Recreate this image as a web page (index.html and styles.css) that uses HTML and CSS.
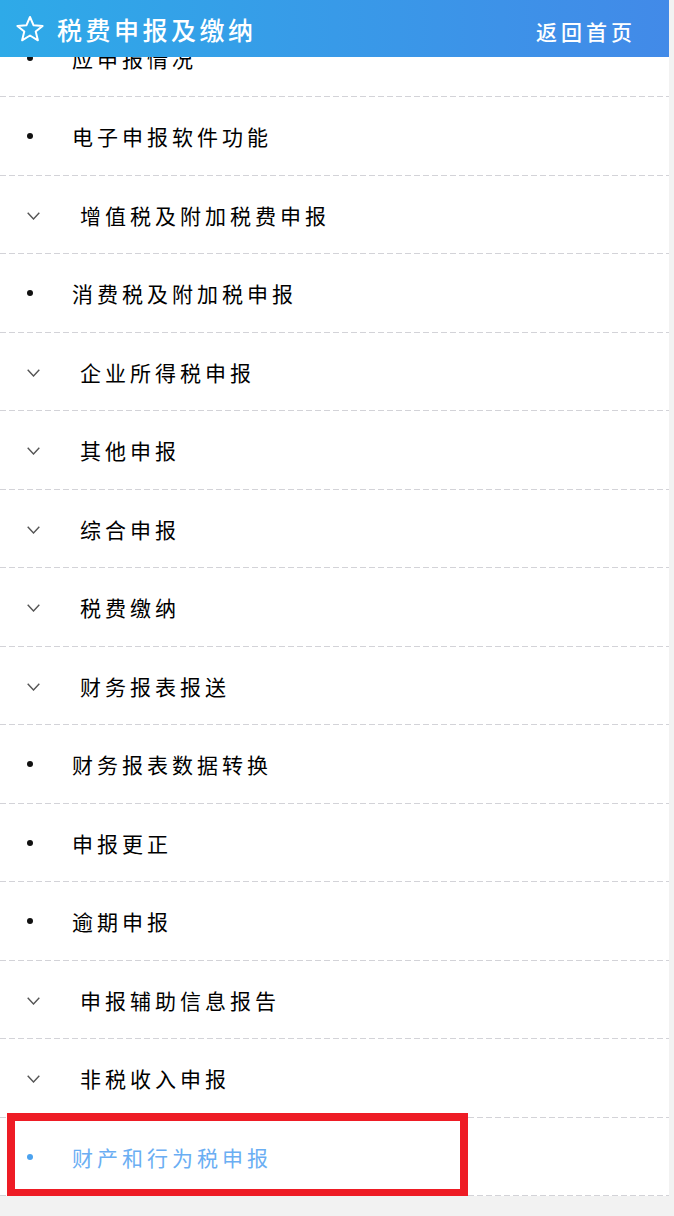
FILE: index.html
```html
<!doctype html>
<html lang="zh-CN">
<head>
    <meta charset="UTF-8">
    <meta name="viewport" content="width=device-width, initial-scale=1.0">
    <title>税费申报及缴纳</title>
    <link rel="stylesheet" href="styles.css">
</head>
<body>
    <div class="head">
        <div class="title">
            <svg class="star" width="30" height="27" viewBox="0 0 30 27">
                <polygon points="15,2 18.6,10.3 27.6,10.9 20.7,16.6 22.9,25.3 15,20.5 7.1,25.3 9.3,16.6 2.4,10.9 11.4,10.3" fill="none" stroke="#fff" stroke-width="2" stroke-linejoin="round"/>
            </svg>
            <span>税费申报及缴纳</span>
        </div>
        <a class="home" href="">返回首页</a>
    </div>
    <div class="page">
        <ul class="menu">
            <li><i class="dot"></i><span>应申报情况</span></li>
            <li><i class="dot"></i><span>电子申报软件功能</span></li>
            <li class="sub"><svg class="arr" width="13" height="8" viewBox="0 0 13 8"><polyline points="0.7,0.7 6.5,7 12.3,0.7" fill="none" stroke="#555" stroke-width="1.4"/></svg><span>增值税及附加税费申报</span></li>
            <li><i class="dot"></i><span>消费税及附加税申报</span></li>
            <li class="sub"><svg class="arr" width="13" height="8" viewBox="0 0 13 8"><polyline points="0.7,0.7 6.5,7 12.3,0.7" fill="none" stroke="#555" stroke-width="1.4"/></svg><span>企业所得税申报</span></li>
            <li class="sub"><svg class="arr" width="13" height="8" viewBox="0 0 13 8"><polyline points="0.7,0.7 6.5,7 12.3,0.7" fill="none" stroke="#555" stroke-width="1.4"/></svg><span>其他申报</span></li>
            <li class="sub"><svg class="arr" width="13" height="8" viewBox="0 0 13 8"><polyline points="0.7,0.7 6.5,7 12.3,0.7" fill="none" stroke="#555" stroke-width="1.4"/></svg><span>综合申报</span></li>
            <li class="sub"><svg class="arr" width="13" height="8" viewBox="0 0 13 8"><polyline points="0.7,0.7 6.5,7 12.3,0.7" fill="none" stroke="#555" stroke-width="1.4"/></svg><span>税费缴纳</span></li>
            <li class="sub"><svg class="arr" width="13" height="8" viewBox="0 0 13 8"><polyline points="0.7,0.7 6.5,7 12.3,0.7" fill="none" stroke="#555" stroke-width="1.4"/></svg><span>财务报表报送</span></li>
            <li><i class="dot"></i><span>财务报表数据转换</span></li>
            <li><i class="dot"></i><span>申报更正</span></li>
            <li><i class="dot"></i><span>逾期申报</span></li>
            <li class="sub"><svg class="arr" width="13" height="8" viewBox="0 0 13 8"><polyline points="0.7,0.7 6.5,7 12.3,0.7" fill="none" stroke="#555" stroke-width="1.4"/></svg><span>申报辅助信息报告</span></li>
            <li class="sub"><svg class="arr" width="13" height="8" viewBox="0 0 13 8"><polyline points="0.7,0.7 6.5,7 12.3,0.7" fill="none" stroke="#555" stroke-width="1.4"/></svg><span>非税收入申报</span></li>
            <li class="on"><i class="dot"></i><span>财产和行为税申报</span><div class="mark"></div></li>
        </ul>
    </div>
</body>
</html>
```

FILE: styles.css
```css
*{
    padding:0;
    margin:0;
}
li{
    list-style:none;
}
a{
    text-decoration:none;
}
body{
    background:#f2f2f2;
    font-family:"Noto Sans CJK SC","Microsoft YaHei",sans-serif;
    color:#000;
}
.head{
    position:fixed;
    top:0;
    left:0;
    z-index:10;
    width:669px;
    height:57px;
    background:linear-gradient(to right,#2eaae8,#428ae8);
    display:flex;
    align-items:center;
    justify-content:space-between;
    color:#fff;
}
.head .title{
    display:flex;
    align-items:center;
    padding-left:15px;
    font-size:25px;
    letter-spacing:3.5px;
    font-weight:500;
}
.head .star{
    margin-right:12px;
    margin-top:-1px;
}
.head .home{
    color:#fff;
    font-size:21px;
    letter-spacing:4px;
    font-weight:500;
    padding-right:33px;
    margin-top:4px;
}
.page{
    width:669px;
    background:#fff;
    padding-top:18.5px;
}
.menu li{
    position:relative;
    height:78.5px;
    box-sizing:border-box;
    padding-left:27px;
    display:flex;
    align-items:center;
    font-size:21px;
    letter-spacing:4px;
    background:repeating-linear-gradient(to right,#d3d3d8 0,#d3d3d8 6px,transparent 6px,transparent 9px) left bottom/100% 1px no-repeat;
}
.menu .dot{
    width:6px;
    height:6px;
    border-radius:50%;
    background:#111;
    margin-right:39px;
}
.menu .arr{
    margin-right:40px;
    margin-top:2px;
}
.menu li.on{
    color:#6aaef3;
}
.menu li.on .dot{
    background:#4ba2ef;
}
.mark{
    position:absolute;
    left:7px;
    top:-5px;
    width:461px;
    height:84px;
    box-sizing:border-box;
    border:8px solid #ee1c25;
}
```
